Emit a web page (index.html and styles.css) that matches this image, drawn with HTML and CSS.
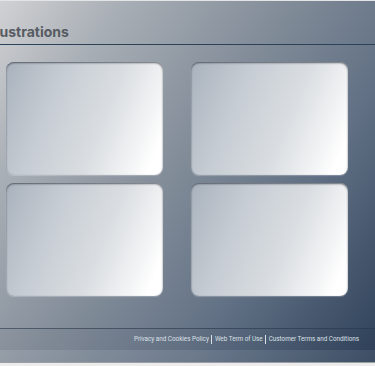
FILE: index.html
```html
<!DOCTYPE html>
<html lang="en">
<head>
  <meta charset="UTF-8">
  <title>Illustrations</title>
  <link rel="stylesheet" href="styles.css">
</head>
<body>
  <div class="page">
    <header class="title-bar">
      <h1>Illustrations</h1>
    </header>

    <main class="gallery">
      <div class="card"></div>
      <div class="card"></div>
      <div class="card"></div>
      <div class="card"></div>
    </main>

    <footer class="site-footer">
      <nav class="legal-links">
        <a href="#">Privacy and Cookies Policy</a>
        <a href="#">Web Term of Use</a>
        <a href="#">Customer Terms and Conditions</a>
      </nav>
    </footer>
    <div class="footer-strip"></div>
  </div>
</body>
</html>
```

FILE: styles.css
```css
html, body {
  margin: 0;
  padding: 0;
}
body {
  font-family: Inter, 'Noto Sans', sans-serif;
  background-color: #ececec;
}
.page {
  width: 375px;
  height: 363px;
  overflow: hidden;
  display: flex;
  flex-direction: column;
  background: linear-gradient(124deg, #d0d1d3 0%, #a8aeb5 20%, #848e9a 45%, #617084 70%, #2e4159 100%);
  border-top: 1px solid #e2e4e6;
  box-sizing: border-box;
}
.title-bar {
  height: 43px;
  border-bottom: 1px solid #2c4259;
  display: flex;
  align-items: flex-end;
  flex-shrink: 0;
}
.title-bar h1 {
  margin: 0 0 4px -12px;
  font-size: 14px;
  font-weight: 700;
  color: #575b62;
}
.gallery {
  display: grid;
  grid-template-columns: 157px 157px;
  grid-auto-rows: 113px;
  column-gap: 28px;
  row-gap: 8px;
  padding: 17px 0 0 6px;
  flex-shrink: 0;
}
.card {
  border-radius: 8px;
  background: linear-gradient(112deg, #a9b2bd 0%, #c6ccd3 30%, #dadee2 60%, #f3f4f5 82%, #ffffff 92%);
  box-shadow: inset 0 1px 2px rgba(40, 45, 55, 0.7), 0 1px 1px rgba(255, 255, 255, 0.25);
}
.site-footer {
  margin-top: 32px;
  height: 21px;
  border-top: 1px solid rgba(40, 55, 75, 0.6);
  background: rgba(20, 30, 45, 0.04);
  display: flex;
  align-items: center;
  justify-content: flex-end;
  padding-right: 16px;
  flex-shrink: 0;
}
.legal-links {
  display: flex;
  align-items: center;
  font-family: Roboto, 'Noto Sans', sans-serif;
  font-size: 6.3px;
  line-height: 9px;
}
.legal-links a {
  color: #dce1e7;
  text-decoration: none;
  padding: 0 2.5px;
}
.legal-links a + a {
  border-left: 1px solid #dce1e7;
}
.legal-links a:last-child {
  padding-right: 0;
}
.footer-strip {
  height: 12px;
  background: rgba(255, 255, 255, 0.07);
  border-bottom: 1px solid #9a9ea3;
  flex-shrink: 0;
}
```
